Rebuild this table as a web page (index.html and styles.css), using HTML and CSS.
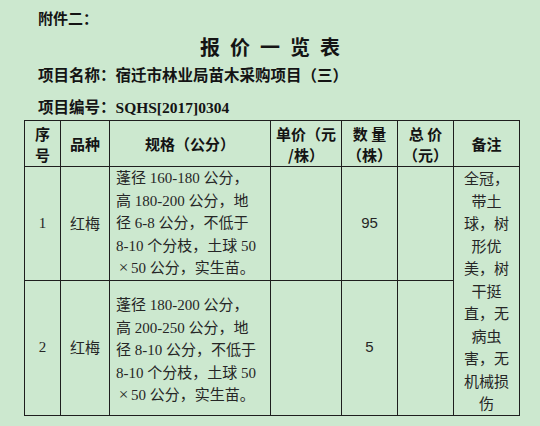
FILE: index.html
```html
<!DOCTYPE html>
<html lang="zh-CN">
<head>
<meta charset="utf-8">
<title>报价一览表</title>
<link rel="stylesheet" href="styles.css">
</head>
<body>
<div class="page">
  <p class="annex">附件二：</p>
  <h1 class="title">报 价 一 览 表</h1>
  <p class="meta meta-name">项目名称：宿迁市林业局苗木采购项目（三）</p>
  <p class="meta meta-code">项目编号：<span class="latin">SQHS[2017]0304</span></p>
  <table class="quote">
    <colgroup>
      <col class="c-no">
      <col class="c-kind">
      <col class="c-spec">
      <col class="c-price">
      <col class="c-qty">
      <col class="c-total">
      <col class="c-note">
    </colgroup>
    <tr class="row-head">
      <th>序<br>号</th>
      <th>品种</th>
      <th>规格（公分）</th>
      <th>单价（元<br>/株）</th>
      <th>数 量<br>（株）</th>
      <th>总 价<br>（元）</th>
      <th>备注</th>
    </tr>
    <tr class="row-1">
      <td>1</td>
      <td class="kind">红梅</td>
      <td class="spec">蓬径 160-180 公分，<br>高 180-200 公分，地<br>径 6-8 公分，不低于<br>8-10 个分枝，土球 50<br><span class="times">×</span>50 公分，实生苗。</td>
      <td></td>
      <td class="qty">95</td>
      <td></td>
      <td class="note" rowspan="2">全冠，<br>带土<br>球，树<br>形优<br>美，树<br>干挺<br>直，无<br>病虫<br>害，无<br>机械损<br>伤</td>
    </tr>
    <tr class="row-2">
      <td>2</td>
      <td class="kind">红梅</td>
      <td class="spec spec-2">蓬径 180-200 公分，<br>高 200-250 公分，地<br>径 8-10 公分，不低于<br>8-10 个分枝，土球 50<br><span class="times">×</span>50 公分，实生苗。</td>
      <td></td>
      <td class="qty">5</td>
      <td></td>
    </tr>
  </table>
</div>
</body>
</html>
```
FILE: styles.css
```css
html, body {
  margin: 0;
  padding: 0;
  background: #cce8cf;
}

body {
  color: #141414;
  font-family: "Liberation Serif", "Noto Sans CJK SC", serif;
}

.page {
  width: 540px;
  height: 426px;
  overflow: hidden;
}

.annex {
  margin: 0;
  padding: 6px 0 0 38px;
  font-family: "Noto Sans CJK SC", sans-serif;
  font-size: 15px;
  line-height: 24px;
  font-weight: bold;
}

.title {
  margin: 0;
  font-size: 20px;
  line-height: 36px;
  font-weight: bold;
  text-align: center;
  word-spacing: 5px;
}

.meta {
  margin: 0;
  padding-left: 38px;
  font-family: "Noto Sans CJK SC", sans-serif;
  font-size: 15.5px;
  font-weight: bold;
}

.meta-name {
  line-height: 16px;
}

.meta-code {
  margin-top: 16px;
  line-height: 17px;
}

.meta .latin {
  font-family: "Liberation Serif", serif;
}

.quote {
  border-collapse: collapse;
  table-layout: fixed;
  width: 495px;
  margin: 4px 0 0 24px;
}

.c-no { width: 36px; }
.c-kind { width: 49px; }
.c-spec { width: 161px; }
.c-price { width: 71px; }
.c-qty { width: 56px; }
.c-total { width: 56px; }
.c-note { width: 66px; }

.quote th,
.quote td {
  border: 1px solid #1e1e1e;
  padding: 0;
  text-align: center;
  vertical-align: middle;
  font-size: 15px;
}

.quote th {
  font-family: "Noto Sans CJK SC", sans-serif;
  font-weight: bold;
  line-height: 21px;
}

.quote td {
  line-height: 22.5px;
  font-weight: normal;
  color: #262626;
}

.row-head { height: 46px; }
.row-1 { height: 113px; }
.row-2 { height: 135px; }

.quote td.kind,
.quote td.note {
  font-family: "Noto Sans CJK SC", sans-serif;
}

.quote td.spec {
  text-align: left;
  padding-left: 6px;
  white-space: nowrap;
}

.quote td.spec-2 {
  padding-top: 6px;
}

.spec .times {
  display: inline-block;
  width: 15px;
  font-size: 17px;
  line-height: 1;
  text-align: center;
}

.quote td.qty {
  font-family: "Liberation Sans", sans-serif;
}
```
